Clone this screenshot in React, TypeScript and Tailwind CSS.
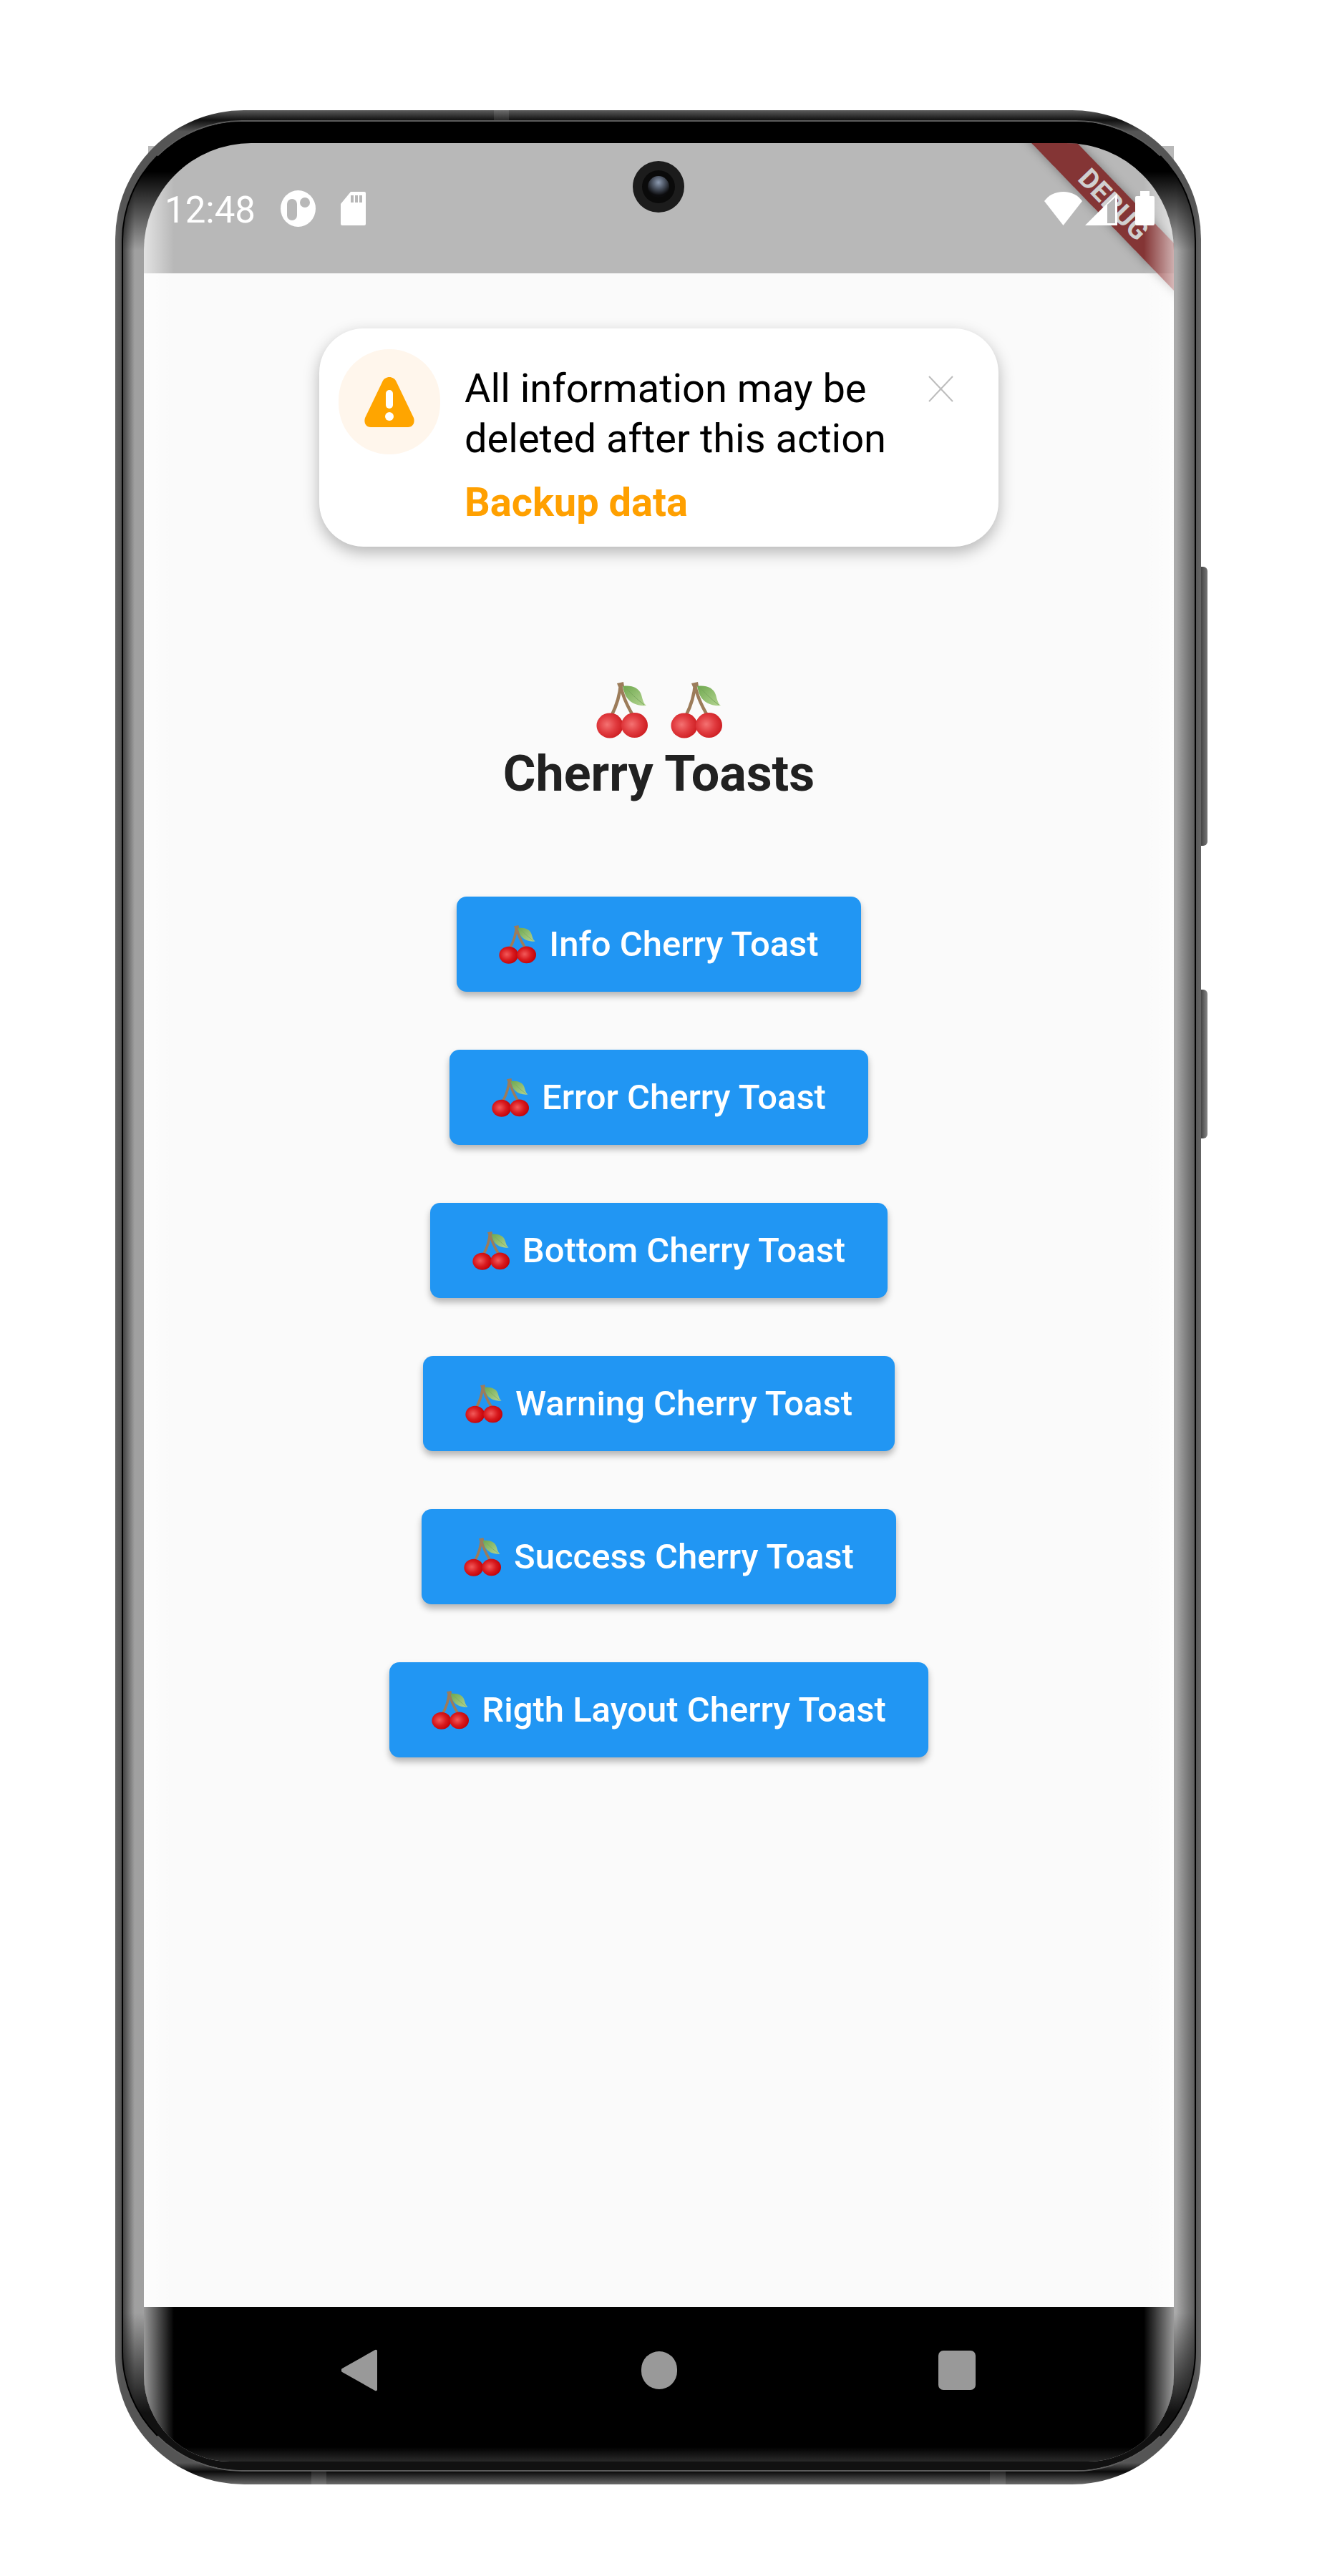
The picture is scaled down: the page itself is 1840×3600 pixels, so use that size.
import { useId } from "react";

const BUTTONS = [
  "Info Cherry Toast",
  "Error Cherry Toast",
  "Bottom Cherry Toast",
  "Warning Cherry Toast",
  "Success Cherry Toast",
  "Rigth Layout Cherry Toast",
];

// No emoji font in the sandbox, so the cherry is drawn by hand
function Cherry({ w, h, dark }: { w: number; h: number; dark?: boolean }) {
  const id = useId();
  return (
    <svg width={w} height={h} viewBox="0 0 72 79" preserveAspectRatio="none" className="shrink-0">
      <defs>
        <radialGradient id={`${id}r`} cx="0.4" cy="0.46" r="0.62">
          <stop offset="0" stopColor={dark ? "#f25a5a" : "#f47272"} />
          <stop offset="0.55" stopColor={dark ? "#d81a1e" : "#e03a3e"} />
          <stop offset="1" stopColor={dark ? "#c00006" : "#cc1c20"} />
        </radialGradient>
        <linearGradient id={`${id}l`} x1="0" y1="0" x2="1" y2="1">
          <stop offset="0" stopColor="#6fa84f" />
          <stop offset="1" stopColor="#b5d592" />
        </linearGradient>
      </defs>
      <path d="M34 3C33 20 28 34 21 48M34 3C36 18 43 33 52 48" stroke="#9c7c5a" strokeWidth={dark ? 5 : 4.5} fill="none" />
      <path d="M29 2l9-2 1 6-8 1z" fill="#9c7c5a" />
      <path d="M37 6C49 4 60 8 63 18c2 7 3 12 7 15-13 1-24-4-29-14-2-4-3-9-4-13z" fill={`url(#${id}l)`} />
      <path d="M41 8c6 6 13 14 26 24" stroke="#7ba75f" strokeWidth="1" fill="none" />
      <ellipse cx="19" cy="61" rx="18.5" ry="17.5" fill={`url(#${id}r)`} />
      <ellipse cx="53.5" cy="60.5" rx="18.5" ry="17.5" fill={`url(#${id}r)`} />
    </svg>
  );
}

function WarningIcon() {
  return (
    <svg width="70" height="70" viewBox="0 0 70 70">
      <path
        d="M25 7C27 2 31 0 35 0s8 2 10 7l24 50c2 7-1 13-8 13H9c-7 0-10-6-8-13z"
        fill="#ffa500"
      />
      <rect x="30" y="18" width="10" height="26" rx="5" fill="#fff" />
      <circle cx="35" cy="55" r="6" fill="#fff" />
    </svg>
  );
}

function StatusBar() {
  return (
    <div className="relative z-10 flex h-[182px] shrink-0 items-center pl-[29px] pr-[27px]">
      <span className="mt-[4px] w-[120px] text-[51px] font-normal leading-none text-white">12:48</span>
      <svg width="49" height="51" viewBox="0 0 49 51" className="ml-[42px]">
        <ellipse cx="24.5" cy="25.5" rx="24.5" ry="25.5" fill="#fff" />
        <rect x="9" y="12" width="14" height="30" rx="7" fill="#b8b8b8" />
        <circle cx="34" cy="17" r="7" fill="#b8b8b8" />
      </svg>
      <svg width="35" height="47" viewBox="0 0 35 47" className="ml-[35px]">
        <path d="M14 0h19a2 2 0 0 1 2 2v43a2 2 0 0 1-2 2H2a2 2 0 0 1-2-2V17z" fill="#fff" />
        <path d="M14 5h4v10h-4zM20 5h4v10h-4zM26 5h4v10h-4z" fill="#b8b8b8" />
      </svg>
      <div className="ml-auto flex items-center">
        <svg width="53" height="47" viewBox="0 0 53 47">
          <path d="M26.5 47L0 13C6 5 15 0 26.5 0S47 5 53 13z" fill="#fff" />
        </svg>
        <svg width="45" height="45" viewBox="0 0 45 45" className="ml-[4px] mt-[2px]">
          <path d="M45 0v45H0z" fill="#fff" />
          <path d="M31 16v26h11V6z" fill="#b8b8b8" />
        </svg>
        <svg width="27" height="48" viewBox="0 0 27 48" className="ml-[25px]">
          <path d="M7 0h13v7h5a2 2 0 0 1 2 2v37a2 2 0 0 1-2 2H2a2 2 0 0 1-2-2V9a2 2 0 0 1 2-2h5z" fill="#fff" />
        </svg>
      </div>
    </div>
  );
}

function Toast() {
  return (
    <div className="flex h-[305px] w-[949px] shrink-0 rounded-[62px] bg-white pl-[27px] pr-[63px] font-['Roboto',sans-serif] shadow-[0_8px_22px_rgba(0,0,0,0.28)]">
      <div className="mt-[29px] flex h-[147px] w-[142px] shrink-0 items-center justify-center rounded-full bg-[#fff6ec]">
        <WarningIcon />
      </div>
      <div className="ml-[34px] pt-[49px]">
        <p className="whitespace-nowrap text-[56px] leading-[70px] text-black">
          All information may be
          <br />
          deleted after this action
        </p>
        <p className="mt-[19px] whitespace-nowrap text-[56px] font-bold leading-[70px] text-[#ffa000]">Backup data</p>
      </div>
      <svg width="35" height="37" viewBox="0 0 35 37" className="ml-auto mt-[66px]">
        <path d="M1 1l33 35M34 1L1 36" stroke="#bdbdbd" strokeWidth="2" fill="none" />
      </svg>
    </div>
  );
}

function Content() {
  return (
    <div className="flex min-h-0 flex-1 flex-col items-center bg-[#fafafa] pt-[77px] font-['Roboto',sans-serif]">
      <Toast />
      <div className="mt-[189px] flex gap-[32px]">
        <Cherry w={72} h={79} />
        <Cherry w={72} h={79} />
      </div>
      <h1 className="mt-[7px] text-[70px] font-bold leading-[84px] text-[#212121]">Cherry Toasts</h1>
      <div className="mt-[130px] flex flex-col items-center gap-[81px]">
        {BUTTONS.map((label) => (
          <button
            key={label}
            className="flex h-[133px] items-center gap-[18px] whitespace-nowrap rounded-[14px] bg-[#2196f3] px-[59px] text-[49px] font-medium text-white shadow-[0_6px_10px_rgba(0,0,0,0.28)]"
          >
            <Cherry w={52} h={54} dark />
            {label}
          </button>
        ))}
      </div>
    </div>
  );
}

function NavBar() {
  return (
    <div className="flex h-[216px] shrink-0 items-center bg-[linear-gradient(to_bottom,#000_0,#000_196px,#2a2a2a_216px)] pb-[40px] pl-[276px]">
      <svg width="50" height="59" viewBox="0 0 50 59">
        <path d="M47 1L1 27a3 3 0 0 0 0 5l46 26a2 2 0 0 0 3-2V3a2 2 0 0 0-3-2z" fill="#999" />
      </svg>
      <div className="ml-[369px] h-[53px] w-[50px] rounded-full bg-[#999]" />
      <div className="ml-[365px] h-[55px] w-[52px] rounded-[7px] bg-[#999]" />
    </div>
  );
}

export default function App() {
  return (
    <div className="min-h-[3600px] bg-white pl-[161px] pt-[154px]">
      <div className="relative h-[3318px] w-[1517px]">
        {/* status bar corners poke out behind the frame in the mockup */}
        <div className="absolute left-[46px] top-[50px] h-[40px] w-[1433px] bg-[#b8b8b8]" />

        {/* side keys */}
        <div className="absolute left-[1517px] top-[638px] h-[390px] w-[9px] rounded-r-[6px] bg-[linear-gradient(to_right,#444,#777)]" />
        <div className="absolute left-[1517px] top-[1229px] h-[208px] w-[9px] rounded-r-[6px] bg-[linear-gradient(to_right,#444,#888)]" />

        <div className="relative h-full rounded-[180px] bg-[linear-gradient(to_bottom,#5c5c5c_0,#111_14px,transparent_30px,transparent_calc(100%-30px),#0a0a0a_calc(100%-18px),#6a6a6a_100%),linear-gradient(to_right,#666_0,#555_9px,#555_calc(100%-9px),#666_100%)] pb-[18px] pl-[9px] pr-[7px] pt-[14px]">
          {/* antenna seams */}
          <div className="absolute left-[529px] top-0 h-[14px] w-[21px] bg-white/10" />
          <div className="absolute bottom-0 left-[274px] h-[18px] w-[21px] bg-white/10" />
          <div className="absolute bottom-0 left-[1222px] h-[18px] w-[22px] bg-white/10" />

          <div className="h-full rounded-[168px] border-2 border-x-black border-y-[#5c5c5c] bg-black">
            <div className="h-full overflow-hidden rounded-[166px] bg-[linear-gradient(to_bottom,#000_0,#000_70px,transparent_180px,transparent_calc(100%-220px),#111_calc(100%-80px)),linear-gradient(to_right,#444_0,#a0a0a0_16px,#aaa_calc(100%-26px),#5e5e5e_100%)] pb-[12px] pl-[29px] pr-[29px] pt-[30px]">
              <div className="relative flex h-full flex-col overflow-hidden rounded-b-[120px] rounded-t-[150px] bg-[#b8b8b8]">
                {/* flutter debug ribbon */}
                <div className="absolute left-[1144px] top-[67px] flex h-[46px] w-[430px] rotate-[46deg] items-center justify-center bg-[rgba(111,0,0,0.71)] pr-[12px] text-[38px] font-bold text-[#d0d0d0] shadow-[0_0_14px_rgba(0,0,0,0.35)]">
                  <span className="font-['Roboto',sans-serif]">DEBUG</span>
                </div>

                <div className="font-['Roboto',sans-serif]">
                  <StatusBar />
                </div>
                <Content />
                <NavBar />

                {/* glass highlight on the curved edges */}
                <div className="pointer-events-none absolute inset-y-0 left-0 w-[42px] bg-[linear-gradient(to_right,rgba(255,255,255,0.6),rgba(255,255,255,0))]" />
                <div className="pointer-events-none absolute inset-y-0 right-0 w-[42px] bg-[linear-gradient(to_left,rgba(255,255,255,0.6),rgba(255,255,255,0))]" />

                {/* punch-hole camera */}
                <div className="absolute left-[683px] top-[25px] flex h-[72px] w-[72px] items-center justify-center rounded-full bg-[#1c1c1c]">
                  <div className="flex h-[46px] w-[46px] items-center justify-center rounded-full bg-[#0a0a0a]">
                    <div className="h-[30px] w-[30px] rounded-full bg-[radial-gradient(circle_at_50%_30%,#8c9ab0_0,#4a5260_35%,#0c0c0e_70%)]" />
                  </div>
                </div>
              </div>
            </div>
          </div>
        </div>
      </div>
    </div>
  );
}
